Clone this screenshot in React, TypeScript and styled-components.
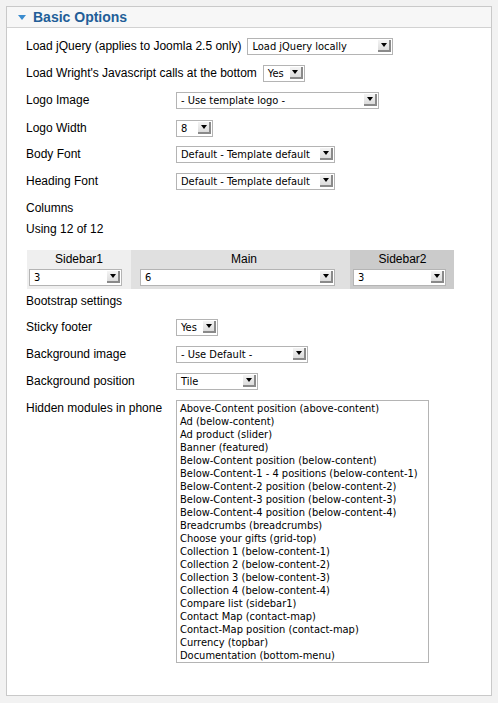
import * as React from 'react';
import styled, { createGlobalStyle } from 'styled-components';

const GlobalStyle = createGlobalStyle`
    body {
        margin: 0;
        background: #f2f2f2;
        font-family: 'Liberation Sans', Arial, sans-serif;
        font-size: 12px;
        color: #000;
    }
`;

const Panel = styled.div`
    margin: 6px 0 0 6px;
    width: 484px;
    background: white;
    border: 1px solid #c9c9c9;
    padding-bottom: 32px;
`;

const Header = styled.div`
    display: flex;
    align-items: center;
    height: 20px;
    padding-left: 11px;
    background: #f7f7f7;
    border-bottom: 1px solid #d2d2d2;
`;

const Triangle = styled.span`
    width: 0;
    height: 0;
    border-left: 4px solid transparent;
    border-right: 4px solid transparent;
    border-top: 5px solid #3a8ccf;
    margin-right: 7px;
    margin-top: 1px;
`;

const HeaderTitle = styled.span`
    font-weight: bold;
    font-size: 14px;
    color: #225e98;
`;

const Content = styled.div`
    padding: 10px 0 0 19px;
    display: flex;
    flex-direction: column;
`;

const Row = styled.div<{ $gap?: number }>`
    display: flex;
    align-items: center;
    min-height: 17px;
    margin-bottom: ${(p) => (p.$gap ?? 10)}px;
`;

const Label = styled.div<{ $inline?: boolean }>`
    width: ${(p) => (p.$inline ? 'auto' : '150px')};
    margin-right: ${(p) => (p.$inline ? '6px' : '0')};
    flex-shrink: 0;
    align-self: ${(p) => (p.$inline ? 'center' : 'flex-start')};
    line-height: 17px;
`;

const SelectBox = styled.div<{ $width: number }>`
    position: relative;
    box-sizing: border-box;
    width: ${(p) => p.$width}px;
    height: 17px;
    border: 1px solid #b4b4b4;
    background: white;
    font-family: 'DejaVu Sans Condensed', 'Noto Sans', sans-serif;
    font-size: 11px;
    line-height: 15px;
    padding-left: 4px;
    color: #000;
    white-space: nowrap;
    overflow: hidden;
`;

const ArrowButton = styled.span`
    position: absolute;
    top: 1px;
    right: 1px;
    width: 13px;
    height: 12px;
    box-sizing: border-box;
    background: linear-gradient(#f4f4f4, #dcdcdc);
    border-right: 2px solid #8a8a8a;
    border-bottom: 2px solid #8a8a8a;
    display: flex;
    align-items: center;
    justify-content: center;

    &::after {
        content: '';
        border-left: 3px solid transparent;
        border-right: 3px solid transparent;
        border-top: 4px solid #000;
    }
`;

function Select({ value, width }: { value: string; width: number }) {
    return (
        <SelectBox $width={width}>
            {value}
            <ArrowButton />
        </SelectBox>
    );
}

const Plain = styled.div<{ $gap: number }>`
    line-height: 17px;
    margin-bottom: ${(p) => p.$gap}px;
`;

const ColumnsTable = styled.div`
    display: grid;
    grid-template-columns: 104px 219px 104px;
    width: 427px;
    margin: 0 0 4px 1px;
`;

const ColumnCell = styled.div<{ $bg: string; $pad: number }>`
    background: ${(p) => p.$bg};
    height: 39px;
    box-sizing: border-box;
    padding: 2px 0 0 ${(p) => p.$pad}px;
    display: flex;
    flex-direction: column;
`;

const ColumnTitle = styled.div`
    text-align: center;
    line-height: 15px;
    margin-bottom: 2px;
    padding-right: 2px;
`;

const ListBox = styled.div`
    width: 253px;
    height: 263px;
    box-sizing: border-box;
    border: 1px solid #b4b4b4;
    padding: 1px 3px;
    font-family: 'DejaVu Sans Condensed', 'Noto Sans', sans-serif;
    font-size: 11px;
    line-height: 13px;
    overflow: hidden;
`;

const ListItem = styled.div`
    white-space: nowrap;
`;

const hiddenModules = [
    'Above-Content position (above-content)',
    'Ad (below-content)',
    'Ad product (slider)',
    'Banner (featured)',
    'Below-Content position (below-content)',
    'Below-Content-1 - 4 positions (below-content-1)',
    'Below-Content-2 position (below-content-2)',
    'Below-Content-3 position (below-content-3)',
    'Below-Content-4 position (below-content-4)',
    'Breadcrumbs (breadcrumbs)',
    'Choose your gifts (grid-top)',
    'Collection 1 (below-content-1)',
    'Collection 2 (below-content-2)',
    'Collection 3 (below-content-3)',
    'Collection 4 (below-content-4)',
    'Compare list (sidebar1)',
    'Contact Map (contact-map)',
    'Contact-Map position (contact-map)',
    'Currency (topbar)',
    'Documentation (bottom-menu)',
];

const columns = [
    { title: 'Sidebar1', value: '3', bg: '#efefef', pad: 2, width: 93 },
    { title: 'Main', value: '6', bg: '#e0e0e0', pad: 9, width: 195 },
    { title: 'Sidebar2', value: '3', bg: '#cbcbcb', pad: 3, width: 93 },
];

export default function App() {
    return (
        <>
            <GlobalStyle />
            <Panel>
                <Header>
                    <Triangle />
                    <HeaderTitle>Basic Options</HeaderTitle>
                </Header>
                <Content>
                    <Row>
                        <Label $inline>Load jQuery (applies to Joomla 2.5 only)</Label>
                        <Select value="Load jQuery locally" width={146} />
                    </Row>
                    <Row>
                        <Label $inline>Load Wright's Javascript calls at the bottom</Label>
                        <Select value="Yes" width={42} />
                    </Row>
                    <Row $gap={11}>
                        <Label>Logo Image</Label>
                        <Select value="- Use template logo -" width={203} />
                    </Row>
                    <Row $gap={9}>
                        <Label>Logo Width</Label>
                        <Select value="8" width={37} />
                    </Row>
                    <Row>
                        <Label>Body Font</Label>
                        <Select value="Default - Template default" width={159} />
                    </Row>
                    <Row>
                        <Label>Heading Font</Label>
                        <Select value="Default - Template default" width={159} />
                    </Row>
                    <Plain $gap={4}>Columns</Plain>
                    <Plain $gap={12}>Using 12 of 12</Plain>
                    <ColumnsTable>
                        {columns.map((c) => (
                            <ColumnCell key={c.title} $bg={c.bg} $pad={c.pad}>
                                <ColumnTitle>{c.title}</ColumnTitle>
                                <Select value={c.value} width={c.width} />
                            </ColumnCell>
                        ))}
                    </ColumnsTable>
                    <Plain $gap={9}>Bootstrap settings</Plain>
                    <Row>
                        <Label>Sticky footer</Label>
                        <Select value="Yes" width={42} />
                    </Row>
                    <Row>
                        <Label>Background image</Label>
                        <Select value="- Use Default -" width={132} />
                    </Row>
                    <Row>
                        <Label>Background position</Label>
                        <Select value="Tile" width={82} />
                    </Row>
                    <Row $gap={0}>
                        <Label>Hidden modules in phone</Label>
                        <ListBox>
                            {hiddenModules.map((m) => (
                                <ListItem key={m}>{m}</ListItem>
                            ))}
                        </ListBox>
                    </Row>
                </Content>
            </Panel>
        </>
    );
}
